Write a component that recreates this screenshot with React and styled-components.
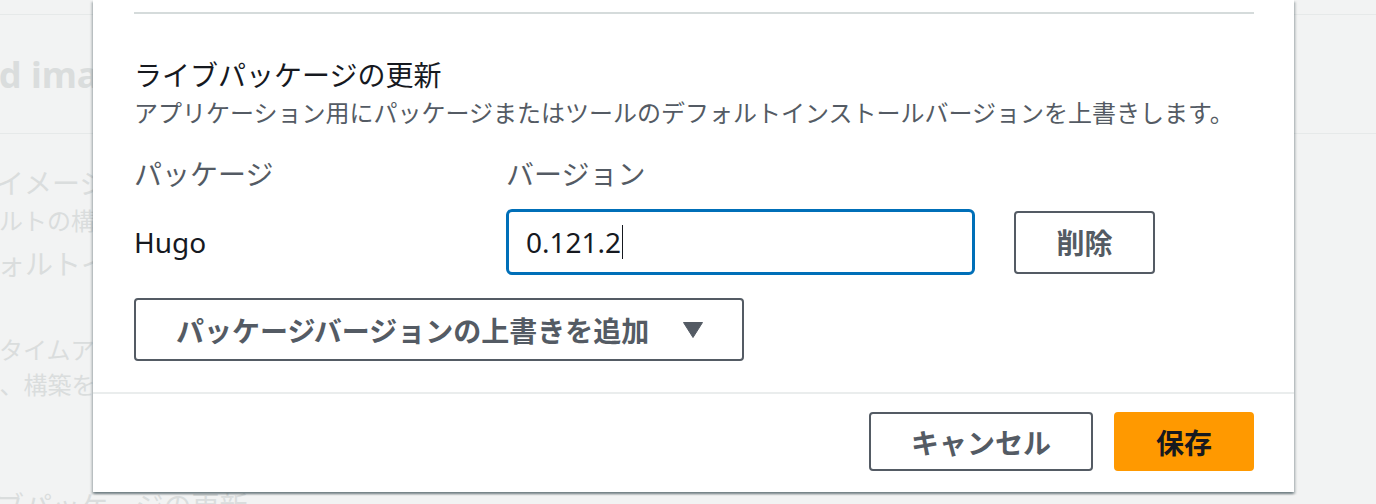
import React from "react";
import styled, { createGlobalStyle } from "styled-components";

const Global = createGlobalStyle`
  html, body { margin: 0; padding: 0; }
  body {
    background: #f2f3f3;
    font-family: "Noto Sans CJK JP", "Noto Sans", sans-serif;
    -webkit-font-smoothing: antialiased;
  }
`;

const Stage = styled.div`
  position: relative;
  width: 1376px;
  height: 504px;
  overflow: hidden;
  background: #f2f3f3;
`;

/* ---------- faded page behind the modal ---------- */
const BgPage = styled.div`
  display: flex;
  flex-direction: column;
  padding-top: 14px;
`;

const BgRule = styled.div`
  height: 1px;
  margin-top: ${(p) => p.$mt || 0}px;
  background: #e6e9e9;
`;

const BgHeading = styled.div`
  margin-top: ${(p) => p.$mt}px;
  margin-left: ${(p) => p.$shift}px;
  font-family: "Noto Sans", "Noto Sans CJK JP", sans-serif;
  font-weight: 700;
  font-size: 36px;
  line-height: 50px;
  color: #dadddd;
  white-space: nowrap;
`;

const BgLine = styled.div`
  margin-top: ${(p) => p.$mt}px;
  margin-left: ${(p) => p.$shift}px;
  font-size: ${(p) => p.$size}px;
  line-height: ${(p) => (p.$size === 28 ? 40 : 32)}px;
  color: #dadddd;
  white-space: nowrap;
`;

/* ---------- modal ---------- */
const Modal = styled.section`
  position: absolute;
  left: 93px;
  top: 0;
  width: 1201px;
  background: #ffffff;
  display: flex;
  flex-direction: column;
  box-shadow: 0 2px 2px 0 rgba(0, 28, 36, 0.35), 2px 2px 2px 0 rgba(0, 28, 36, 0.15),
    -2px 2px 2px 0 rgba(0, 28, 36, 0.15);
`;

const ModalBody = styled.div`
  display: flex;
  flex-direction: column;
  padding: 12px 40px 31px 41px;
`;

const Divider = styled.div`
  height: 2px;
  background: #d5dbdb;
`;

const Title = styled.h2`
  margin: 40px 0 0;
  font-size: 28px;
  line-height: 40px;
  font-weight: 400;
  color: #16191f;
`;

const Description = styled.p`
  margin: 2px 0 0;
  font-size: 24px;
  line-height: 32px;
  color: #545b64;
`;

const FieldGrid = styled.div`
  margin-top: 25px;
  display: grid;
  grid-template-columns: 333px 469px 141px;
  column-gap: 39px;
  row-gap: 16px;
  align-items: center;
`;

const FieldLabel = styled.div`
  font-size: 28px;
  line-height: 40px;
  color: #545b64;
`;

const PackageName = styled.div`
  font-family: "Noto Sans", "Noto Sans CJK JP", sans-serif;
  font-size: 28px;
  line-height: 40px;
  color: #16191f;
`;

const VersionInput = styled.div`
  box-sizing: border-box;
  height: 66px;
  display: flex;
  align-items: center;
  padding-left: 17px;
  border: 3px solid #006fb8;
  border-radius: 6px;
  font-family: "Noto Sans", "Noto Sans CJK JP", sans-serif;
  font-size: 28px;
  color: #16191f;
`;

const TextCaret = styled.span`
  display: inline-block;
  width: 1px;
  height: 34px;
  margin-left: 1px;
  background: #16191f;
`;

const Button = styled.button`
  box-sizing: border-box;
  height: ${(p) => p.$h}px;
  display: inline-flex;
  align-items: center;
  justify-content: center;
  gap: 34px;
  padding: 0 ${(p) => p.$pr || 40}px 0 40px;
  border: 2px solid ${(p) => (p.$primary ? "#ff9900" : "#545b64")};
  border-radius: 4px;
  background: ${(p) => (p.$primary ? "#ff9900" : "#ffffff")};
  color: ${(p) => (p.$primary ? "#16191f" : "#545b64")};
  font-family: "Noto Sans CJK JP", "Noto Sans", sans-serif;
  font-size: 28px;
  font-weight: 700;
  line-height: 1;
  cursor: pointer;
`;

const AddRow = styled.div`
  margin-top: 23px;
  display: flex;
`;

const Footer = styled.div`
  display: flex;
  justify-content: flex-end;
  gap: 21px;
  padding: 18px 40px 21px;
  border-top: 2px solid #eaeded;
`;

const DropdownIcon = () => (
  <svg width="20" height="16" viewBox="0 0 20 16" aria-hidden="true">
    <polygon points="0.5,0.5 19.5,0.5 10,15.5" fill="#545b64" stroke="#545b64" strokeLinejoin="round" />
  </svg>
);

export default function App() {
  return (
    <>
      <Global />
      <Stage>
        <BgPage aria-hidden="true">
          <BgRule />
          <BgHeading $mt={35} $shift={-70}>Build image settings</BgHeading>
          <BgRule $mt={33} />
          <BgLine $mt={28} $size={28} $shift={-88}>ビルドイメージ</BgLine>
          <BgLine $mt={2} $size={24} $shift={-73}>デフォルトの構築イメージを使用します</BgLine>
          <BgLine $mt={7} $size={28} $shift={-59}>デフォルトイメージ</BgLine>
          <BgLine $mt={50} $size={24} $shift={-49}>ランタイムアプリケーション</BgLine>
          <BgLine $mt={3} $size={24} $shift={-168}>イメージを選択、構築をカスタマイズします</BgLine>
          <BgLine $mt={85} $size={28} $shift={-60}>ライブパッケージの更新</BgLine>
        </BgPage>

        <Modal role="dialog">
          <ModalBody>
            <Divider />
            <Title>ライブパッケージの更新</Title>
            <Description>
              アプリケーション用にパッケージまたはツールのデフォルトインストールバージョンを上書きします。
            </Description>
            <FieldGrid>
              <FieldLabel>パッケージ</FieldLabel>
              <FieldLabel>バージョン</FieldLabel>
              <div />
              <PackageName>Hugo</PackageName>
              <VersionInput role="textbox">
                0.121.2
                <TextCaret />
              </VersionInput>
              <Button $h={63}>削除</Button>
            </FieldGrid>
            <AddRow>
              <Button $h={63} $pr={39}>
                パッケージバージョンの上書きを追加
                <DropdownIcon />
              </Button>
            </AddRow>
          </ModalBody>
          <Footer>
            <Button $h={59}>キャンセル</Button>
            <Button $h={59} $primary>保存</Button>
          </Footer>
        </Modal>
      </Stage>
    </>
  );
}
